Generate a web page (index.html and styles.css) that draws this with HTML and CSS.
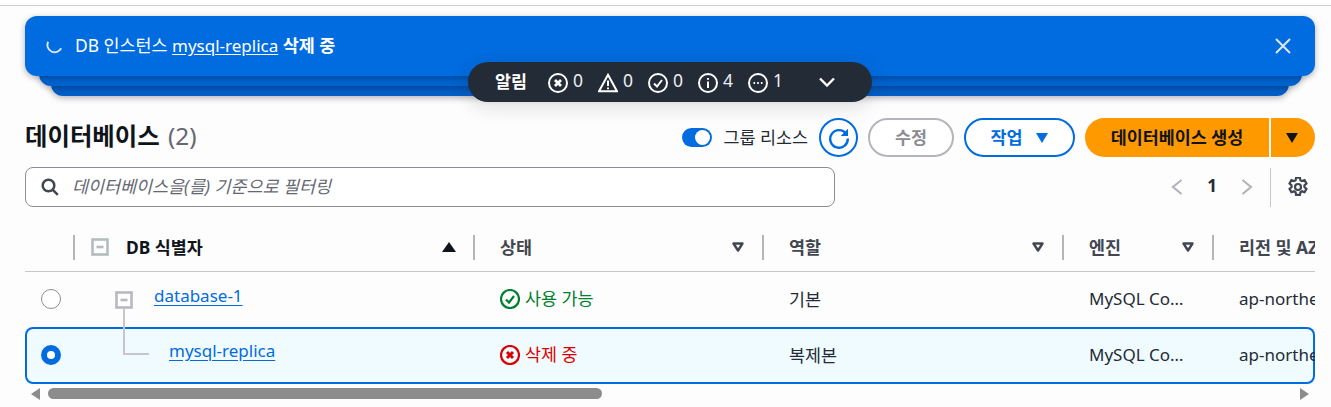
FILE: index.html
```html
<!DOCTYPE html>
<html lang="ko">
<head>
<meta charset="utf-8">
<title>데이터베이스</title>
<link rel="stylesheet" href="styles.css">
</head>
<body>
<div class="topline"></div>
<main class="page">
  <section class="flash-stack">
    <div class="flash-back flash-back-2"></div>
    <div class="flash-back flash-back-1"></div>
    <div class="flash">
      <svg class="spinner" viewBox="0 0 16 16"><path d="M2.2 3.7A7 7 0 0 0 15.2 10.3"/></svg>
      <span class="flash-text">DB 인스턴스 <a href="#">mysql-replica</a> <b>삭제 중</b></span>
      <svg class="flash-close" viewBox="0 0 16 16"><path d="M1 1l14 14M15 1L1 15"/></svg>
    </div>
    <div class="pill">
      <b class="pill-title">알림</b>
      <span class="pill-item"><svg viewBox="0 0 20 20"><circle cx="10" cy="10" r="9"/><path class="thick" d="M7 7l6 6M13 7l-6 6"/></svg><span class="n">0</span></span>
      <span class="pill-item"><svg viewBox="0 0 20 20"><path d="M10 1.8L19 18.2H1z"/><path d="M10 7.5v5.5M10 14.6v1.6"/></svg><span class="n">0</span></span>
      <span class="pill-item"><svg viewBox="0 0 20 20"><circle cx="10" cy="10" r="9"/><path d="M6 10.5l3 3 5-6.5"/></svg><span class="n">0</span></span>
      <span class="pill-item"><svg viewBox="0 0 20 20"><circle cx="10" cy="10" r="9"/><path d="M10 8.5V15M10 5v1.8"/></svg><span class="n">4</span></span>
      <span class="pill-item"><svg viewBox="0 0 20 20"><circle cx="10" cy="10" r="9"/><path d="M5.5 10h1.6M9.2 10h1.6M12.9 10h1.6"/></svg><span class="n">1</span></span>
      <svg class="pill-chevron" viewBox="0 0 16 10"><path d="M1 1.5l7 7 7-7"/></svg>
    </div>
  </section>

  <header class="head">
    <h1 class="title">데이터베이스 <span class="count">(2)</span></h1>
    <div class="actions">
      <span class="toggle"><i></i></span>
      <span class="toggle-label">그룹 리소스</span>
      <button class="btn btn-icon"><svg viewBox="0 0 20 20"><path d="M16.5 6.2A8 8 0 1 0 18 10.5"/><path class="fill" d="M18.2 1.5v6.7h-6.7z"/></svg></button>
      <button class="btn btn-disabled">수정</button>
      <button class="btn btn-normal">작업 <svg class="caret" viewBox="0 0 12 10"><path d="M0 0h12L6 10z"/></svg></button>
      <div class="split">
        <button class="btn-primary">데이터베이스 생성</button>
        <button class="btn-primary btn-primary-caret"><svg class="caret" viewBox="0 0 12 10"><path d="M0 0h12L6 10z"/></svg></button>
      </div>
    </div>
  </header>

  <div class="filter-row">
    <label class="filter">
      <svg viewBox="0 0 18 18"><circle cx="7.5" cy="7.5" r="5.8"/><path d="M11.8 11.8l5 5"/></svg>
      <span>데이터베이스을(를) 기준으로 필터링</span>
    </label>
    <div class="pager">
      <svg class="pg-arrow" viewBox="0 0 12 16"><path d="M10.5 1L2 8l8.5 7"/></svg>
      <b class="pg-num">1</b>
      <svg class="pg-arrow" viewBox="0 0 12 16"><path d="M1.5 1L10 8l-8.5 7"/></svg>
      <span class="pg-sep"></span>
      <svg class="gear" viewBox="1 1 18 18"><path d="M8.3 1.5h3.4l.5 2.4 1.4.8 2.3-.8 1.7 3-1.8 1.6v1.6l1.8 1.6-1.7 3-2.3-.8-1.4.8-.5 2.4H8.3l-.5-2.4-1.4-.8-2.3.8-1.7-3 1.8-1.6V8.5L2.4 6.9l1.7-3 2.3.8 1.4-.8z"/><circle cx="10" cy="10" r="2.7"/></svg>
    </div>
  </div>

  <section class="table">
    <div class="thead">
      <div class="th th-select"></div>
      <div class="th th-id"><svg class="tree-box head-box" viewBox="0 0 18 18"><rect x="1.5" y="1.5" width="15" height="15"/><path d="M5.5 9h7"/></svg><b>DB 식별자</b><svg class="sort" viewBox="0 0 14 10"><path class="solid" d="M7 0l7 10H0z"/></svg></div>
      <div class="th"><b>상태</b><svg class="sort" viewBox="0 0 14 10"><path d="M2.5 1.5h9L7 8.5z"/></svg></div>
      <div class="th"><b>역할</b><svg class="sort" viewBox="0 0 14 10"><path d="M2.5 1.5h9L7 8.5z"/></svg></div>
      <div class="th"><b>엔진</b><svg class="sort" viewBox="0 0 14 10"><path d="M2.5 1.5h9L7 8.5z"/></svg></div>
      <div class="th th-last"><b>리전 및 AZ</b></div>
    </div>

    <div class="row">
      <div class="td td-select"><span class="radio"></span></div>
      <div class="td td-id">
        <span class="tree-parent"><svg class="tree-box" viewBox="0 0 18 18"><rect x="1.5" y="1.5" width="15" height="15"/><path d="M5.5 9h7"/></svg></span>
        <a class="db-link" href="#">database-1</a>
      </div>
      <div class="td td-status ok"><svg viewBox="0 0 20 20"><circle cx="10" cy="10" r="9"/><path d="M6 10.5l3 3 5-6.5"/></svg>사용 가능</div>
      <div class="td">기본</div>
      <div class="td"><span class="ellipsis">MySQL Community</span></div>
      <div class="td td-last">ap-northeast-2a</div>
    </div>

    <div class="row row-selected">
      <div class="td td-select"><span class="radio radio-on"></span></div>
      <div class="td td-id td-child">
        <span class="tree-elbow"></span>
        <a class="db-link" href="#">mysql-replica</a>
      </div>
      <div class="td td-status bad"><svg viewBox="0 0 20 20"><circle cx="10" cy="10" r="9"/><path class="thick" d="M7 7l6 6M13 7l-6 6"/></svg>삭제 중</div>
      <div class="td">복제본</div>
      <div class="td"><span class="ellipsis">MySQL Community</span></div>
      <div class="td td-last">ap-northeast-2a</div>
    </div>
  </section>

  <div class="scrollbar">
    <svg class="sb-arrow" viewBox="0 0 9 12"><path d="M9 0v12L0 6z"/></svg>
    <span class="sb-track"><span class="sb-thumb"></span></span>
    <svg class="sb-arrow" viewBox="0 0 9 12"><path d="M0 0v12l9-6z"/></svg>
  </div>
</main>
</body>
</html>
```

FILE: styles.css
```css
* { box-sizing: border-box; }
html, body { margin: 0; height: 407px; overflow: hidden; }
body {
  background: #fdfdfd;
  color: #232b37;
  font-family: "Noto Sans", "Noto Sans CJK KR", sans-serif;
  font-size: 17.4px;
}
a { color: inherit; }
svg { display: block; flex: none; fill: none; }

.topline { height: 6px; border-bottom: 1px solid #cfcfcf; background: #fff; }
.page { padding: 10px 16px 0 25px; }

/* flash */
.flash-stack { position: relative; height: 80px; }
.flash {
  position: relative;
  display: flex;
  align-items: center;
  height: 60px;
  padding: 0 24px 0 21px;
  border-radius: 12px;
  background: #006ce0;
  color: #fff;
  box-shadow: 0 2px 6px rgba(0, 7, 22, .3);
}
.flash-back {
  position: absolute;
  height: 50px;
  border-radius: 12px;
  box-shadow: 0 2px 6px rgba(0, 7, 22, .3);
}
.flash-back-1 { left: 14px; right: 13px; top: 20px; background: #0063cf; }
.flash-back-2 { left: 26px; right: 26px; top: 30px; background: #005fc7; }
.spinner { width: 16px; height: 16px; margin-right: 13px; stroke: #dbe8fa; stroke-width: 1.9; }
.flash-text { flex: 1; margin-top: -3px; }
.flash-text a { font-size: 17px; text-underline-offset: 2px; }
.flash-close { width: 16px; height: 16px; stroke: #e2e6ee; stroke-width: 2; margin-top: -1px; }

.pill {
  position: absolute;
  left: 443px;
  top: 46px;
  width: 404px;
  height: 40px;
  display: flex;
  align-items: center;
  padding-left: 27px;
  border-radius: 20px;
  background: #232b37;
  color: #fff;
  box-shadow: 0 4px 20px rgba(0, 7, 22, .14);
}
.pill-title { width: 53px; margin-top: -3px; }
.pill-item {
  display: flex;
  align-items: center;
  width: 50px;
  gap: 5px;
  color: #eceef2;
  font-size: 17.5px;
}
.n { margin-top: -4px; }
.pill-item svg { width: 20px; height: 20px; margin-top: 1px; stroke: #fff; stroke-width: 2; }
.pill-item svg .thick { stroke-width: 2.8; }
.pill-chevron { width: 16px; height: 10px; margin-left: 21px; stroke: #fff; stroke-width: 2.4; }

/* header */
.head {
  display: flex;
  align-items: center;
  justify-content: space-between;
  height: 39px;
  margin-top: 22px;
}
.title { margin: -4px 0 0; font-size: 24.4px; line-height: 36px; font-weight: 700; color: #0f141a; }
.count { margin-left: 2px; font-weight: 400; color: #656871; }
.actions { display: flex; align-items: center; }
.toggle {
  display: flex;
  justify-content: flex-end;
  align-items: center;
  width: 30px;
  height: 19px;
  padding-right: 2px;
  border-radius: 10px;
  background: #006ce0;
}
.toggle i { width: 15px; height: 15px; border-radius: 50%; background: #fff; }
.toggle-label { margin: -3px 11px 0 11px; color: #232b37; }
.btn {
  display: flex;
  align-items: center;
  justify-content: center;
  height: 39px;
  padding: 0 0 2px;
  border-radius: 20px;
  border: 2px solid #006ce0;
  background: #fff;
  color: #006ce0;
  font: 700 17.4px "Noto Sans", "Noto Sans CJK KR", sans-serif;
}
.btn-icon { width: 39px; margin-right: 10px; padding: 0; }
.btn-icon svg { width: 22px; height: 22px; stroke: #006ce0; stroke-width: 2.2; }
.btn-icon .fill { fill: #006ce0; stroke: none; }
.btn-disabled { width: 86px; margin-right: 10px; border-color: #b4b4bb; color: #8c8c94; }
.btn-normal { width: 111px; margin-right: 10px; gap: 12px; }
.caret { width: 14px; height: 10px; }
.btn-normal .caret { fill: #006ce0; margin-top: 2px; }
.split { display: flex; gap: 2px; }
.btn-primary {
  width: 184px;
  height: 39px;
  padding: 0 0 3px;
  border: 0;
  border-radius: 20px 0 0 20px;
  background: #ff9900;
  color: #0f141a;
  font: 700 17.4px "Noto Sans", "Noto Sans CJK KR", sans-serif;
}
.btn-primary-caret {
  display: flex;
  align-items: center;
  justify-content: center;
  width: 44px;
  padding: 0;
  border-radius: 0 20px 20px 0;
}
.btn-primary-caret .caret { fill: #0f141a; margin-right: 3px; }

/* filter */
.filter-row { display: flex; align-items: center; justify-content: space-between; height: 40px; margin-top: 10px; }
.filter {
  display: flex;
  align-items: center;
  gap: 13px;
  width: 810px;
  height: 40px;
  padding-left: 15px;
  border: 1px solid #8c8c94;
  border-radius: 8px;
  background: #fff;
  color: #656871;
  font-style: italic;
}
.filter span { margin-top: -3px; }
.filter svg { width: 18px; height: 18px; stroke: #424650; stroke-width: 2.5; }
.pager { display: flex; align-items: center; height: 40px; }
.pg-arrow { width: 12px; height: 16px; stroke: #b4b4bb; stroke-width: 2.2; }
.pg-num { width: 58px; margin-top: -3px; text-align: center; font-size: 17px; color: #232b37; }
.pg-sep { width: 1px; height: 39px; margin: 0 17px 0 17px; background: #c6c6cd; }
.gear { width: 20px; height: 20px; margin-right: 7px; stroke: #424650; stroke-width: 2; }

/* table */
.table { margin-top: 20px; }
.thead, .row {
  display: grid;
  grid-template-columns: 48px 400px 289px 300px 150px 103px;
}
.thead { height: 45px; border-bottom: 1px solid #c6c6cd; }
.th {
  position: relative;
  display: flex;
  align-items: center;
  justify-content: space-between;
  padding: 0 17px 5px 27px;
  color: #424650;
  overflow: hidden;
  white-space: nowrap;
}
.th::before {
  content: "";
  position: absolute;
  left: 0;
  top: 8px;
  height: 25px;
  width: 2px;
  background: #b4b4bb;
}
.th-select::before { display: none; }
.th-id { justify-content: flex-start; padding-left: 18px; color: #0f141a; }
.th-id b { margin-left: 17px; }
.th-id .sort { margin-left: auto; }
.th-last { padding-right: 0; }
.sort { width: 14px; height: 10px; stroke: #424650; stroke-width: 2.4; stroke-linejoin: round; }
.sort .solid { fill: #0f141a; stroke: none; }
.tree-box { width: 18px; height: 18px; stroke: #b8b8c0; stroke-width: 2.6; }
.head-box { stroke: #b4bcbd; }

.row { height: 55px; border-radius: 8px; }
.row-selected {
  position: relative;
  height: 57px;
  background: #f0fbff;
  box-shadow: inset 0 0 0 2px #006ce0;
}
.td {
  position: relative;
  display: flex;
  align-items: center;
  padding: 0 24px 2px 27px;
  min-width: 0;
  white-space: nowrap;
  color: #232b37;
}
.td-last { padding-right: 0; overflow: hidden; font-size: 17px; }
.ellipsis { overflow: hidden; text-overflow: ellipsis; font-size: 17px; }
.td-select { justify-content: flex-start; padding: 0 0 2px 16px; }
.radio {
  width: 20px;
  height: 20px;
  border: 1.5px solid #8c8c94;
  border-radius: 50%;
  background: #fff;
}
.radio-on { border: 6px solid #006ce0; }
.td-id { padding: 0; }
.tree-parent { position: absolute; left: 42px; top: 19px; }
.tree-parent::after {
  content: "";
  position: absolute;
  left: 8px;
  top: 18px;
  width: 2px;
  height: 18px;
  background: #c6c6cd;
}
.tree-elbow {
  position: absolute;
  left: 50px;
  top: 0;
  width: 26px;
  height: 28px;
  border-left: 2px solid #c6c6cd;
  border-bottom: 2px solid #c6c6cd;
}
.db-link {
  position: relative;
  top: -4px;
  margin-left: 81px;
  font-size: 17px;
  color: #006ce0;
  text-underline-offset: 3px;
}
.td-child .db-link { margin-left: 96px; top: -5px; }
.td-status { gap: 5px; padding-bottom: 4px; }
.td-status svg { width: 20px; height: 20px; stroke-width: 2.2; margin-top: 2px; }
.td-status svg .thick { stroke-width: 3; }
.ok { color: #00802f; }
.ok svg { stroke: #00802f; }
.bad { color: #db0000; }
.bad svg { stroke: #db0000; }

/* scrollbar */
.scrollbar { display: flex; align-items: center; gap: 8px; height: 11px; margin-top: 4px; padding: 0 6px; }
.sb-arrow { width: 9px; height: 12px; fill: #8c8c8c; }
.sb-track { flex: 1; height: 11px; }
.sb-thumb { display: block; width: 554px; height: 11px; border-radius: 6px; background: #8c8c8c; }
```
